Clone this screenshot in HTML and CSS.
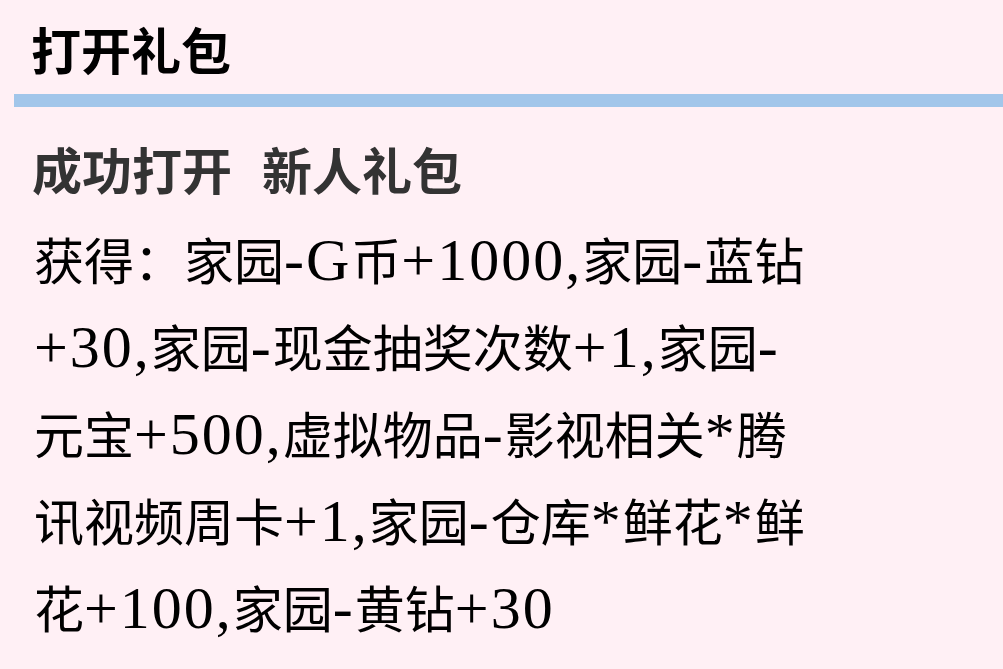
FILE: index.html
```html
<!DOCTYPE html>
<html lang="zh-CN">
<head>
<meta charset="utf-8">
<title>打开礼包</title>
<link rel="stylesheet" href="styles.css">
</head>
<body>
<div class="page">
  <header class="header">
    <h1 class="title">打开礼包</h1>
  </header>
  <div class="divider"></div>
  <main class="content">
    <h2 class="result">成功打开<span class="gap"></span>新人礼包</h2>
    <p class="rewards">获得：家园<span class="n">-G</span>币<span class="n">+1000,</span>家园<span class="n">-</span>蓝钻<br><span class="n">+30,</span>家园<span class="n">-</span>现金抽奖次数<span class="n">+1,</span>家园<span class="n">-</span><br>元宝<span class="n">+500,</span>虚拟物品<span class="n">-</span>影视相关<span class="n">*</span>腾<br>讯视频周卡<span class="n">+1,</span>家园<span class="n">-</span>仓库<span class="n">*</span>鲜花<span class="n">*</span>鲜<br>花<span class="n">+100,</span>家园<span class="n">-</span>黄钻<span class="n">+30</span></p>
  </main>
</div>
</body>
</html>
```

FILE: styles.css
```css
html, body {
  margin: 0;
  padding: 0;
  background: #fff0f5;
}

.page {
  width: 1003px;
  height: 669px;
  overflow: hidden;
  font-family: "Noto Sans CJK SC", sans-serif;
  font-size: 50px;
}

.header {
  padding: 18px 0 0 31px;
}

.title {
  margin: 0;
  font-size: 50px;
  line-height: 60px;
  font-weight: 700;
  color: #000;
}

.divider {
  margin: 16px 0 0 14px;
  height: 13px;
  background: #a2c6ea;
}

.content {
  padding: 16px 0 0 32px;
}

.result {
  margin: 0;
  font-size: 50px;
  line-height: 91px;
  font-weight: 700;
  color: #333;
}

.gap {
  display: inline-block;
  width: 30px;
}

.rewards {
  margin: 6px 0 0 2px;
  font-family: "Liberation Serif", "Noto Sans CJK SC", serif;
  font-size: 50px;
  line-height: 87px;
  font-weight: 400;
  color: #000;
  white-space: nowrap;
}

.n {
  font-family: "Liberation Serif", serif;
  font-size: 60px;
  line-height: 1;
  letter-spacing: 2px;
}
```
